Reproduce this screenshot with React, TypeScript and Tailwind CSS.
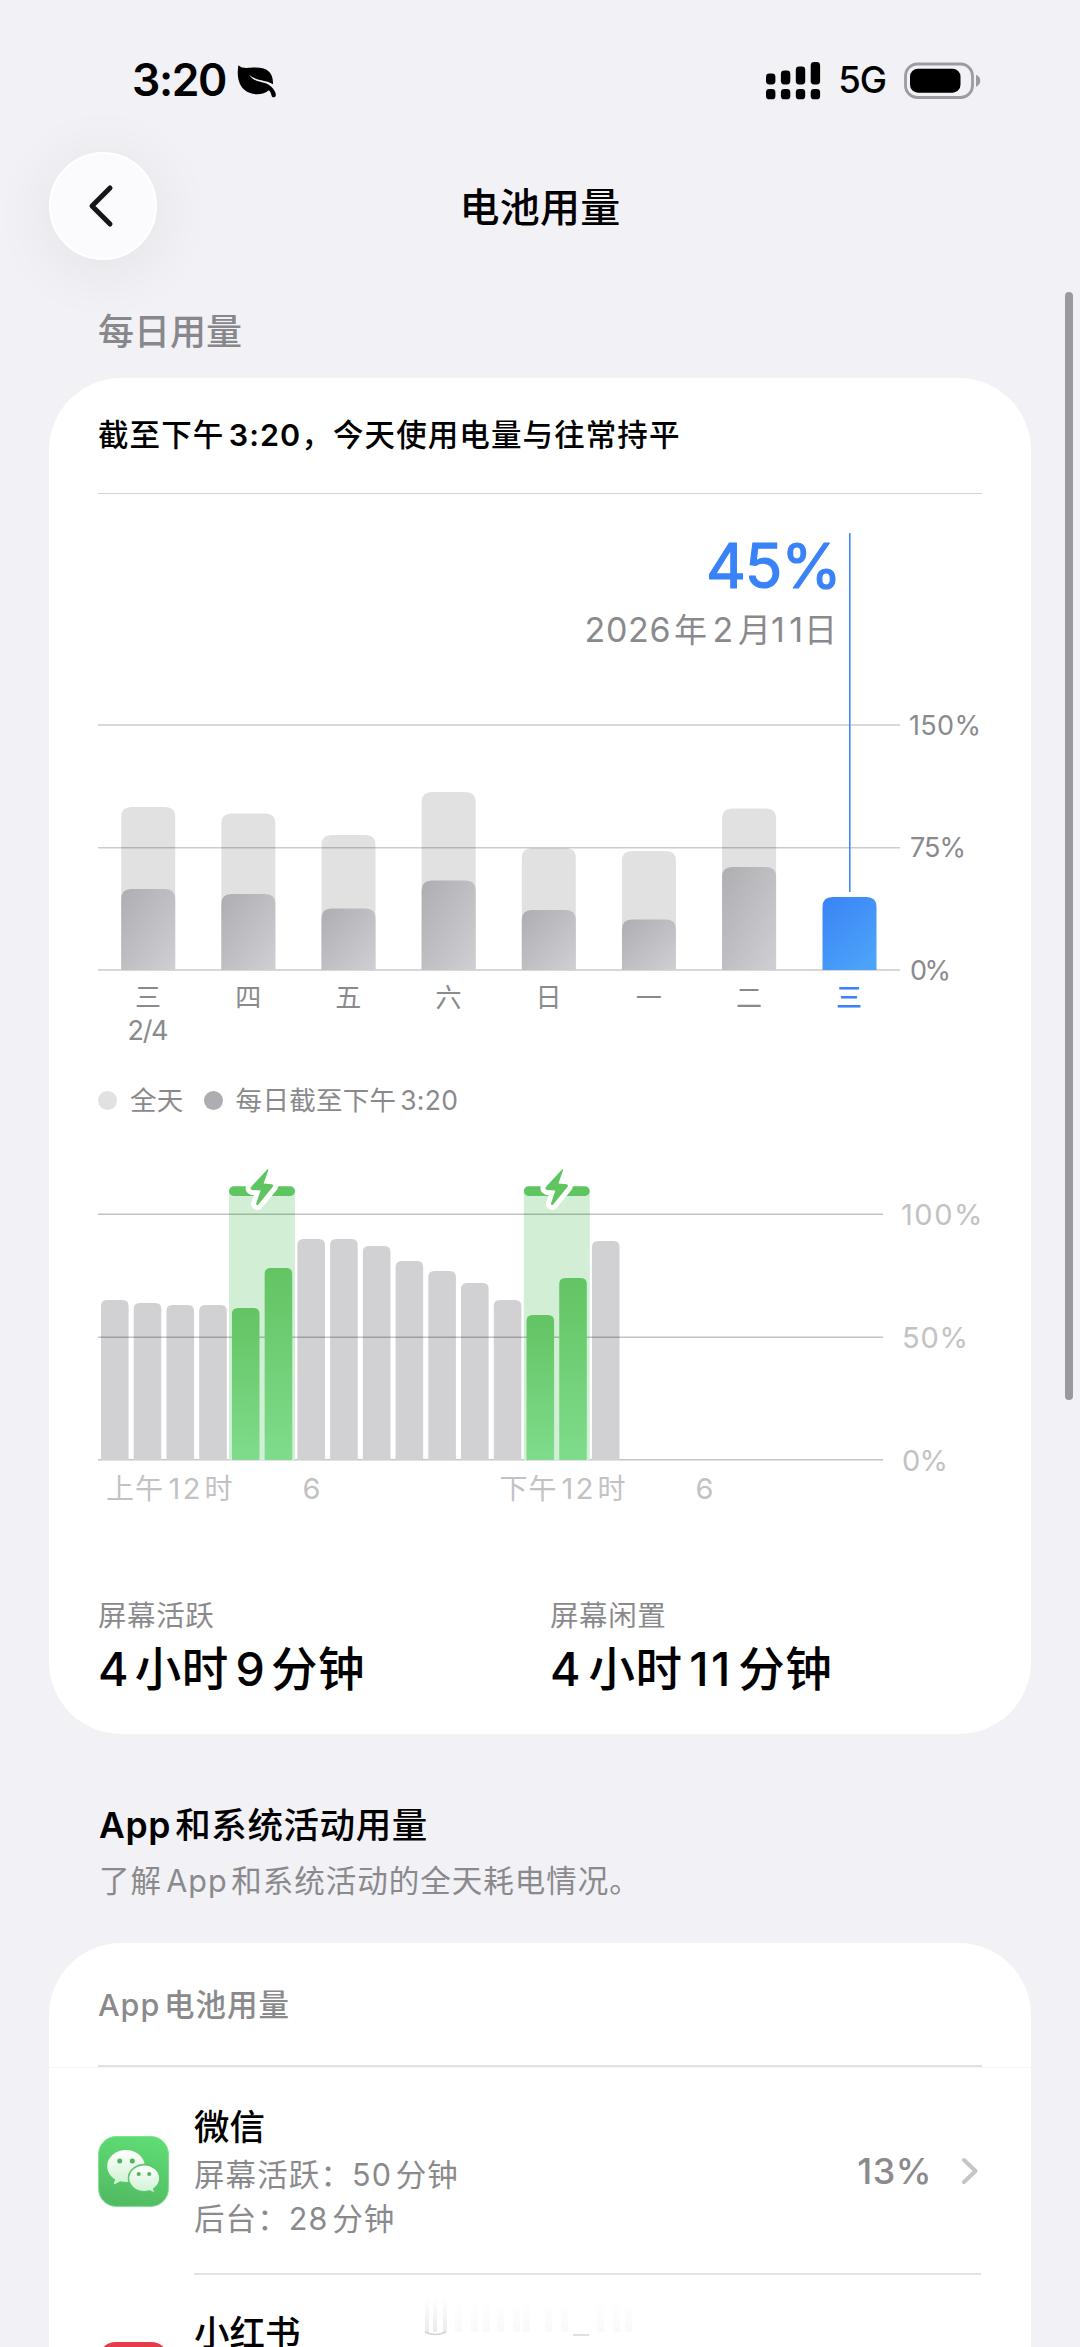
import React from "react";

const LATIN = "font-['Inter','Noto_Sans_CJK_SC',sans-serif]";

/* Adds a hair of space around Latin runs set among Chinese characters. */
function Mixed({ text, latin = "" }: { text: string; latin?: string }) {
  const parts = text.split(/([A-Za-z0-9:]+)/).filter(Boolean);
  return (
    <>
      {parts.map((p, i) => {
        if (!/[A-Za-z0-9]/.test(p)) return <span key={i}>{p}</span>;
        const before = i > 0 && !/[，：]$/.test(parts[i - 1]);
        const after = i < parts.length - 1 && !/^[，：]/.test(parts[i + 1]);
        return (
          <span key={i} className={latin + (before ? " ml-[0.14em]" : "") + (after ? " mr-[0.12em]" : "")}>
            {p}
          </span>
        );
      })}
    </>
  );
}

function StatusBar() {
  const bars = [72, 69, 65, 60.5];
  return (
    <div className="flex h-[152px] items-center pt-[9px] pl-[132px] pr-[99px]">
      <span className="text-[44.5px] leading-none font-semibold tracking-[-1.4px]">3:20</span>
      <svg className="ml-[11px]" width="40" height="34" viewBox="0 0 40 34">
        <path
          d="M1.4 1.2C5 5 10 3.8 18 3.6C29 3.4 36.5 7.5 36 20.2C30 16 17.5 16.5 12 10.6C17 19.5 27.5 16.5 34 22.4C37 25.2 39 28.5 38.8 31.2C38.6 33.8 35 34 34.5 31.4C34 29 33.4 27.4 31.8 26.2C26 31.8 13.5 31.5 7 25.5C0 19 .2 8 1.4 1.2Z"
          fill="#000"
        />
      </svg>
      <div className="flex-1" />
      <svg width="56" height="40" viewBox="765 59.5 56 40">
        {bars.map((t, i) => (
          <g key={i}>
            <rect x={766 + i * 14.9} y={t} width="9.4" height={83 - t} rx="3.4" />
            <rect x={766 + i * 14.9} y="87.5" width="9.4" height="10.3" rx="3.4" />
          </g>
        ))}
      </svg>
      <span className="ml-[17px] text-[36.5px] leading-none font-medium tracking-[-1px]">5G</span>
      <svg className="ml-[17px]" width="78" height="38" viewBox="903 60.5 78 38">
        <rect x="905.5" y="62.5" width="67" height="33.5" rx="12" fill="none" stroke="#9b9ba0" strokeWidth="2.8" />
        <rect x="910" y="67.2" width="50.5" height="24" rx="8" />
        <path d="M976 73.2C978.8 74.2 980.3 76.6 980.3 79.2S978.8 84.2 976 85.2Z" fill="#9b9ba0" />
      </svg>
    </div>
  );
}

function DailyChart() {
  const days = [
    { d: "三", full: 807, part: 889 },
    { d: "四", full: 813.5, part: 894 },
    { d: "五", full: 835, part: 908.5 },
    { d: "六", full: 792, part: 880.5 },
    { d: "日", full: 848, part: 910 },
    { d: "一", full: 851, part: 919.6 },
    { d: "二", full: 808.5, part: 867 },
  ];
  const bar = (x: number, t: number) =>
    `M${x} 970V${t + 10}Q${x} ${t} ${x + 10} ${t}H${x + 44}Q${x + 54} ${t} ${x + 54} ${t + 10}V970Z`;
  return (
    <svg className="block" width="883" height="576" viewBox="98 494 883 576">
      <defs>
        <linearGradient id="gray" x1="0" y1="0" x2="1" y2="1">
          <stop offset="0" stopColor="#aeaeb2" />
          <stop offset="1" stopColor="#cfcfd4" />
        </linearGradient>
        <linearGradient id="blue" x1="0" y1="0" x2="0.7" y2="1">
          <stop offset="0" stopColor="#3a82f7" />
          <stop offset="1" stopColor="#4ba3f8" />
        </linearGradient>
      </defs>
      <path d="M98 970H900" stroke="#cbcbcd" strokeWidth="1.6" />
      {days.map((b, i) => (
        <g key={i}>
          <path d={bar(121.2 + i * 100.15, b.full)} fill="#e1e1e2" />
          <path d={bar(121.2 + i * 100.15, b.part)} fill="url(#gray)" />
        </g>
      ))}
      <path d="M98 725H900M98 847.7H900" stroke="#000" strokeOpacity="0.2" strokeWidth="1.6" />
      <path d={bar(822.5, 897)} fill="url(#blue)" />
      <path d="M849.8 533V892" stroke="#3a82f7" strokeWidth="1.5" />
      <text
        x="706"
        y="587.5"
        textLength="136"
        className="text-[62px] font-normal"
        fill="#3a82f7"
        stroke="#3a82f7"
        strokeWidth="1.2"
        strokeLinejoin="round"
      >
        45%
      </text>
      <g fill="#8a8a8d" className="text-[34px]">
        <text x="584.5" y="641.5" textLength="86">2026</text>
        <text x="674" y="641.5" className="text-[33px]">年</text>
        <text x="712.500" y="641.5">2</text>
        <text x="738" y="641.5" className="text-[33px]">月</text>
        <text x="771" y="641.5" textLength="32">11</text>
        <text x="804" y="641.5" className="text-[33px]">日</text>
      </g>
      <g fill="#8a8a8d" className="text-[27px]">
        <text x="909" y="734.5" textLength="72">150%</text>
        <text x="910" y="857" textLength="56">75%</text>
        <text x="910" y="979.5" textLength="41">0%</text>
        {days.map((b, i) => (
          <text key={i} x={148 + i * 100.15} y="1007" textAnchor="middle" className="text-[26px]">
            {b.d}
          </text>
        ))}
        <text x="849" y="1007" textAnchor="middle" fill="#3a82f7" className="text-[26px] font-medium">三</text>
        <text x="148" y="1040" textAnchor="middle" textLength="41">2/4</text>
      </g>
    </svg>
  );
}

function HourlyChart() {
  const tops = [1300, 1303, 1305, 1305, 1308, 1268, 1239, 1239, 1246, 1261, 1271, 1283, 1300, 1315, 1278, 1241];
  const green = [4, 5, 13, 14];
  const bar = (i: number) => {
    const x = 101 + i * 32.73;
    const t = tops[i];
    return `M${x} 1460V${t + 6}Q${x} ${t} ${x + 6} ${t}H${x + 21.6}Q${x + 27.6} ${t} ${x + 27.6} ${t + 6}V1460Z`;
  };
  return (
    <svg className="block" width="883" height="380" viewBox="98 1140 883 380">
      <defs>
        <linearGradient id="green" x1="0" y1="0" x2="0" y2="1">
          <stop offset="0" stopColor="#62c462" />
          <stop offset="1" stopColor="#7fdc8c" />
        </linearGradient>
      </defs>
      <path d="M98 1459.7H883" stroke="#c6c6c8" strokeWidth="1.6" />
      <rect x="229" y="1191" width="66" height="269" fill="#d2efd6" />
      <rect x="523.8" y="1191" width="66" height="269" fill="#d2efd6" />
      {tops.map((_, i) => (green.includes(i) ? null : <path key={i} d={bar(i)} fill="#d1d1d3" />))}
      <path d="M98 1214.3H883M98 1337.2H883" stroke="#000" strokeOpacity="0.24" strokeWidth="1.5" />
      {green.map((i) => (
        <path key={i} d={bar(i)} fill="url(#green)" />
      ))}
      {[0, 294.8].map((dx) => (
        <g key={dx} transform={`translate(${dx} 0)`}>
          <rect x="229" y="1186.3" width="66" height="9.6" rx="4.8" fill="#5fc560" />
          <path
            d="M267.2 1169.5L250.8 1187.2Q250 1189.4 252 1189.9L260.6 1190.6L256 1204Q257 1205.6 258.4 1204.4L273 1186.6Q273.8 1184.6 271.8 1184.2L263.6 1183.5L268.2 1170.4Q268.2 1169 267.2 1169.5Z"
            fill="#5fc560"
            stroke="#fff"
            strokeWidth="10"
            strokeLinejoin="round"
            paintOrder="stroke"
          />
        </g>
      ))}
      <g fill="#c2c2c4" className="text-[29px]">
        <text x="901" y="1224.7" textLength="81.5">100%</text>
        <text x="902" y="1348" textLength="66">50%</text>
        <text x="902" y="1470.5" textLength="46">0%</text>
        {[0, 393].map((dx) => (
          <g key={dx}>
            <text x={dx ? 499.5 : 106} y="1498.5" textLength="57" className="text-[28px]">
              {dx ? "下午" : "上午"}
            </text>
            <text x={168.5 + dx} y="1498.5" textLength="32">12</text>
            <text x={204.5 + dx} y="1498.5" className="text-[28px]">时</text>
            <text x={302.5 + dx} y="1498.5">6</text>
          </g>
        ))}
      </g>
    </svg>
  );
}

function WeChatIcon() {
  return (
    <svg width="71" height="71" viewBox="0 0 71 71">
      <defs>
        <linearGradient id="wx" x1="0.6" y1="0" x2="0.4" y2="1">
          <stop offset="0" stopColor="#5fdc74" />
          <stop offset="1" stopColor="#52ba62" />
        </linearGradient>
        <linearGradient id="bub" x1="0" y1="0" x2="0" y2="1">
          <stop offset="0" stopColor="#fff" />
          <stop offset="1" stopColor="#cdf2d2" />
        </linearGradient>
      </defs>
      <rect x="0.6" y="0.6" width="69.8" height="69.8" rx="17.5" fill="url(#wx)" stroke="#7de08c" strokeWidth="1" />
      <path d="M28 14C38.400 14 46.800 21.400 46.800 30S38.400 46 28 46Q25 46 22.400 45.300L16.600 48.200Q15.400 48.400 15.800 47.200L17.200 43.400C12 40.300 9.200 35.500 9.200 30C9.200 21.400 17.600 14 28 14Z" fill="url(#bub)" />
      <circle cx="21.700" cy="25" r="2.500" fill="#4fb35f" />
      <circle cx="34.300" cy="25" r="2.500" fill="#4fb35f" />
      <path d="M46.300 28.600C54.900 28.600 61.900 34.700 61.900 42.300Q61.900 48.600 55.800 53L57 56.200Q57 57.400 55.800 56.900L51.400 54.900Q48.900 55.700 46.300 55.700C37.700 55.700 30.500 49.700 30.500 42.300S37.700 28.600 46.300 28.600Z" fill="url(#bub)" stroke="#59c86a" strokeWidth="1.600" />
      <circle cx="40.700" cy="37.900" r="2" fill="#4fb35f" />
      <circle cx="51.200" cy="37.900" r="2" fill="#4fb35f" />
    </svg>
  );
}

function Stat({ label, value, latin }: { label: string; value: string; latin?: string }) {
  return (
    <div className="w-[452px] shrink-0 whitespace-nowrap">
      <div className="h-[42px] text-[28.5px] leading-[42px] tracking-[0.6px] text-[#8a8a8d]">{label}</div>
      <div className="mt-[2px] text-[46.5px] leading-[60px] font-medium tracking-[0.6px]">
        <Mixed text={value} latin={latin} />
      </div>
    </div>
  );
}

export default function App() {
  return (
    <div className={"relative h-[2347px] w-[1080px] overflow-hidden bg-[#f1f1f6] text-black " + LATIN}>
      <StatusBar />

      <header className="grid h-[108px] grid-cols-[108px_1fr_108px] items-center px-[49px]">
        <button className="flex size-[108px] items-center justify-center rounded-full border-2 border-white bg-[#fbfbfe] shadow-[0_8px_60px_8px_rgba(0,0,0,0.055)]">
          <svg className="-ml-[5px]" width="28" height="44" viewBox="0 0 28 44">
            <path d="M23 4L5 22L23 40" fill="none" stroke="#16161a" strokeWidth="5" strokeLinecap="round" strokeLinejoin="round" />
          </svg>
        </button>
        <h1 className="pt-[4px] text-center text-[40px] leading-none font-medium tracking-[0.3px]">电池用量</h1>
      </header>

      <div className="flex h-[118px] items-center pt-[26px] pl-[98px] text-[36px] leading-none font-medium text-[#88888c]">
        每日用量
      </div>

      <section className="mx-[49px] flex h-[1356px] flex-col rounded-[72px] bg-white px-[49px]">
        <div className="flex h-[116px] items-center border-b border-[#d3d3d5] text-[30.5px] leading-none font-medium tracking-[1.1px] whitespace-nowrap">
          <span>
            <Mixed text="截至下午3:20，今天使用电量与往常持平" latin="font-semibold" />
          </span>
        </div>
        <DailyChart />
        <div className="flex h-[61px] items-center text-[26.5px] leading-none tracking-[0.3px] text-[#8a8a8d]">
          <i className="mr-[13px] size-[19px] rounded-full bg-[#e1e1e2]" />
          <span>全天</span>
          <i className="mr-[13px] ml-[20px] size-[19px] rounded-full bg-[#aeaeb2]" />
          <span><Mixed text="每日截至下午3:20" /></span>
        </div>
        <div className="mt-[9px]">
          <HourlyChart />
        </div>
        <div className="mt-[75px] flex">
          <Stat label="屏幕活跃" value="4小时9分钟" />
          <Stat label="屏幕闲置" value="4小时11分钟" latin="tracking-[2.4px]" />
        </div>
      </section>

      <div className="h-[209px] pt-[65px] pl-[99px] whitespace-nowrap">
        <h2 className="text-[35.500px] leading-[54px] font-medium tracking-[0.600px]">
          <Mixed text="App和系统活动用量" latin="font-semibold" />
        </h2>
        <p className="pt-[1px] text-[30.500px] leading-[54px] tracking-[1px] text-[#8a8a8d]">
          <Mixed text="了解App和系统活动的全天耗电情况。" />
        </p>
      </div>

      <section className="mx-[49px] h-[460px] rounded-t-[72px] bg-white">
        <div className="flex h-[125px] flex-col border-b border-[#f6f6f7] px-[49px]">
          <div className="flex flex-1 items-center pt-[2px] text-[30.500px] leading-none font-medium tracking-[1px] text-[#8a8a8d]">
            <span><Mixed text="App电池用量" /></span>
          </div>
          <div className="h-[2px] bg-[#e2e2e4]" />
        </div>
        <div className="flex pl-[49px]">
          <div className="flex h-[207px] w-[96px] items-center">
            <WeChatIcon />
          </div>
          <div className="mr-[50px] flex h-[207px] flex-1 items-center border-b-2 border-[#e4e4e6]">
            <div className="flex-1 pt-[2px] whitespace-nowrap">
              <div className="text-[35.500px] leading-[50px] font-medium">微信</div>
              <div className="text-[30.500px] leading-[44px] tracking-[1.100px] text-[#8a8a8d]">
                <div><Mixed text="屏幕活跃：50分钟" /></div>
                <div><Mixed text="后台：28分钟" /></div>
              </div>
            </div>
            <span className="text-[36px] font-medium tracking-[0.500px] text-[#8a8a8d]">13%</span>
            <svg className="mr-[1px] ml-[28px]" width="20" height="30" viewBox="0 0 20 30">
              <path d="M4 4L15.500 15L4 26" fill="none" stroke="#c5c5c8" strokeWidth="4" strokeLinecap="round" strokeLinejoin="round" />
            </svg>
          </div>
        </div>
        <div className="flex pl-[49px]">
          <div className="w-[96px] pt-[67px]">
            <div className="size-[71px] rounded-[18px] bg-[#e63b48]" />
          </div>
          <div className="pt-[34px] text-[35.500px] leading-[50px] font-medium whitespace-nowrap">小红书</div>
        </div>
      </section>

      <svg className="absolute top-[2290px] left-[415px]" width="250" height="50" viewBox="0 0 250 50">
        <defs>
          <linearGradient id="haze" x1="0" y1="0" x2="0" y2="1">
            <stop offset="0" stopColor="#fff" />
            <stop offset="1" stopColor="#ebebed" />
          </linearGradient>
        </defs>
        {[10, 18, 28].map((x) => (
          <rect key={x} x={x} y="8" width="4" height="34" fill="url(#haze)" />
        ))}
        <path d="M10 42Q20 47 31 42" fill="none" stroke="#d6d6d8" strokeWidth="1.500" />
        {[40, 56, 68, 82, 98, 108, 130, 146, 182, 198, 210].map((x) => (
          <rect key={x} x={x} y="10" width="7" height="32" fill="url(#haze)" opacity="0.300" />
        ))}
        <path d="M158 45H174" stroke="#d6d6d8" strokeWidth="1.500" />
      </svg>

      <div className="absolute top-[292px] left-[1065px] h-[1108px] w-[8px] rounded-full bg-[#9a9a9e]" />
    </div>
  );
}
